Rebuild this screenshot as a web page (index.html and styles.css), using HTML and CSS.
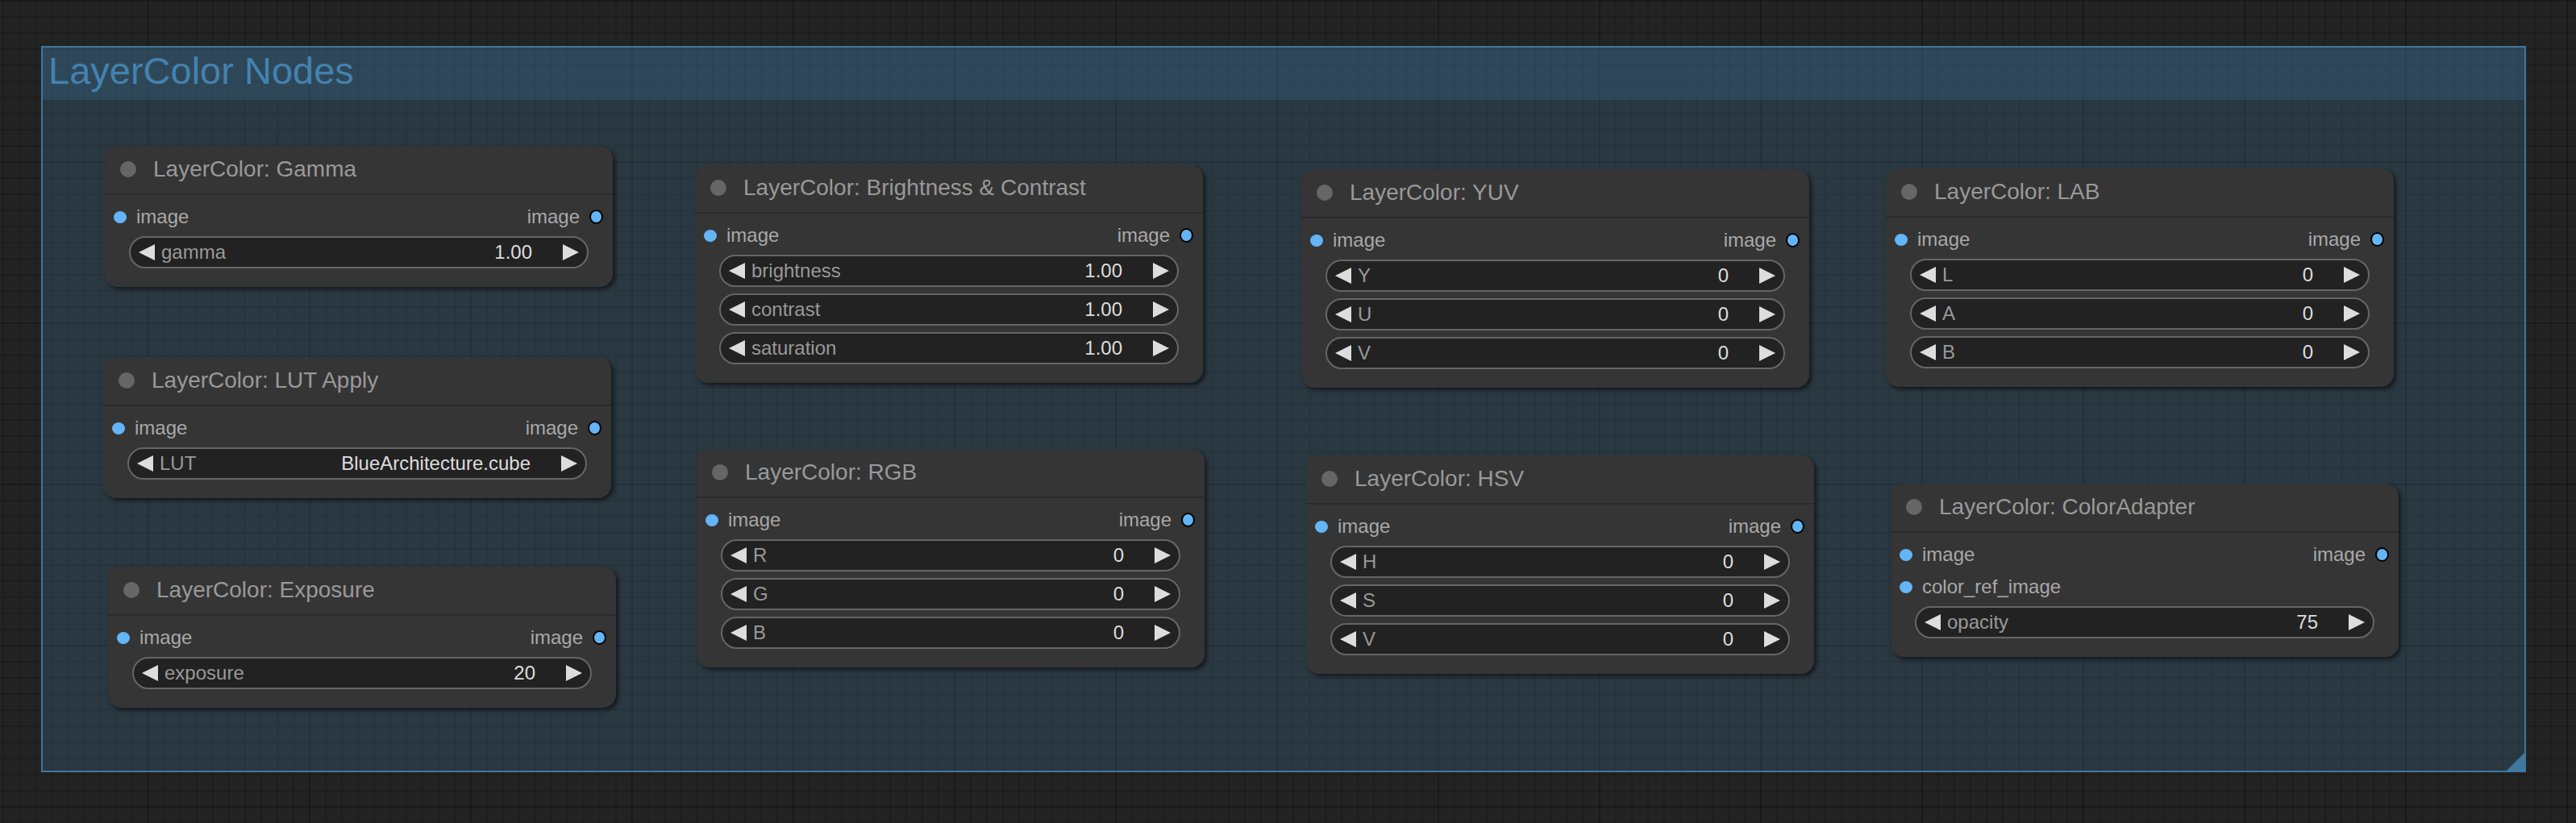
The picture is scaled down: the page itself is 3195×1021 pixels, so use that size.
FILE: index.html
```html
<!DOCTYPE html>
<html>
<head>
<meta charset="utf-8">
<title>LayerColor Nodes</title>
<link rel="stylesheet" href="styles.css">
</head>
<body>
<div class="canvas">
  <div class="group">
    <div class="group-title">LayerColor Nodes</div>
    <div class="group-resize"></div>
  </div>

  <div class="node n-gamma">
    <div class="node-title"><span class="title-dot"></span><span class="title-text">LayerColor: Gamma</span></div>
    <div class="node-body">
      <div class="slot-row"><div class="slot-in"><span class="dot"></span><span class="slot-label">image</span></div><div class="slot-out"><span class="slot-label">image</span><span class="dot out"></span></div></div>
      <div class="widgets">
        <div class="widget"><span class="arrow-l"></span><span class="w-label">gamma</span><span class="w-value">1.00</span><span class="arrow-r"></span></div>
      </div>
    </div>
  </div>

  <div class="node n-lut">
    <div class="node-title"><span class="title-dot"></span><span class="title-text">LayerColor: LUT Apply</span></div>
    <div class="node-body">
      <div class="slot-row"><div class="slot-in"><span class="dot"></span><span class="slot-label">image</span></div><div class="slot-out"><span class="slot-label">image</span><span class="dot out"></span></div></div>
      <div class="widgets">
        <div class="widget"><span class="arrow-l"></span><span class="w-label">LUT</span><span class="w-value">BlueArchitecture.cube</span><span class="arrow-r"></span></div>
      </div>
    </div>
  </div>

  <div class="node n-exposure">
    <div class="node-title"><span class="title-dot"></span><span class="title-text">LayerColor: Exposure</span></div>
    <div class="node-body">
      <div class="slot-row"><div class="slot-in"><span class="dot"></span><span class="slot-label">image</span></div><div class="slot-out"><span class="slot-label">image</span><span class="dot out"></span></div></div>
      <div class="widgets">
        <div class="widget"><span class="arrow-l"></span><span class="w-label">exposure</span><span class="w-value">20</span><span class="arrow-r"></span></div>
      </div>
    </div>
  </div>

  <div class="node n-bc">
    <div class="node-title"><span class="title-dot"></span><span class="title-text">LayerColor: Brightness &amp; Contrast</span></div>
    <div class="node-body">
      <div class="slot-row"><div class="slot-in"><span class="dot"></span><span class="slot-label">image</span></div><div class="slot-out"><span class="slot-label">image</span><span class="dot out"></span></div></div>
      <div class="widgets">
        <div class="widget"><span class="arrow-l"></span><span class="w-label">brightness</span><span class="w-value">1.00</span><span class="arrow-r"></span></div>
        <div class="widget"><span class="arrow-l"></span><span class="w-label">contrast</span><span class="w-value">1.00</span><span class="arrow-r"></span></div>
        <div class="widget"><span class="arrow-l"></span><span class="w-label">saturation</span><span class="w-value">1.00</span><span class="arrow-r"></span></div>
      </div>
    </div>
  </div>

  <div class="node n-rgb">
    <div class="node-title"><span class="title-dot"></span><span class="title-text">LayerColor: RGB</span></div>
    <div class="node-body">
      <div class="slot-row"><div class="slot-in"><span class="dot"></span><span class="slot-label">image</span></div><div class="slot-out"><span class="slot-label">image</span><span class="dot out"></span></div></div>
      <div class="widgets">
        <div class="widget"><span class="arrow-l"></span><span class="w-label">R</span><span class="w-value">0</span><span class="arrow-r"></span></div>
        <div class="widget"><span class="arrow-l"></span><span class="w-label">G</span><span class="w-value">0</span><span class="arrow-r"></span></div>
        <div class="widget"><span class="arrow-l"></span><span class="w-label">B</span><span class="w-value">0</span><span class="arrow-r"></span></div>
      </div>
    </div>
  </div>

  <div class="node n-yuv">
    <div class="node-title"><span class="title-dot"></span><span class="title-text">LayerColor: YUV</span></div>
    <div class="node-body">
      <div class="slot-row"><div class="slot-in"><span class="dot"></span><span class="slot-label">image</span></div><div class="slot-out"><span class="slot-label">image</span><span class="dot out"></span></div></div>
      <div class="widgets">
        <div class="widget"><span class="arrow-l"></span><span class="w-label">Y</span><span class="w-value">0</span><span class="arrow-r"></span></div>
        <div class="widget"><span class="arrow-l"></span><span class="w-label">U</span><span class="w-value">0</span><span class="arrow-r"></span></div>
        <div class="widget"><span class="arrow-l"></span><span class="w-label">V</span><span class="w-value">0</span><span class="arrow-r"></span></div>
      </div>
    </div>
  </div>

  <div class="node n-hsv">
    <div class="node-title"><span class="title-dot"></span><span class="title-text">LayerColor: HSV</span></div>
    <div class="node-body">
      <div class="slot-row"><div class="slot-in"><span class="dot"></span><span class="slot-label">image</span></div><div class="slot-out"><span class="slot-label">image</span><span class="dot out"></span></div></div>
      <div class="widgets">
        <div class="widget"><span class="arrow-l"></span><span class="w-label">H</span><span class="w-value">0</span><span class="arrow-r"></span></div>
        <div class="widget"><span class="arrow-l"></span><span class="w-label">S</span><span class="w-value">0</span><span class="arrow-r"></span></div>
        <div class="widget"><span class="arrow-l"></span><span class="w-label">V</span><span class="w-value">0</span><span class="arrow-r"></span></div>
      </div>
    </div>
  </div>

  <div class="node n-lab">
    <div class="node-title"><span class="title-dot"></span><span class="title-text">LayerColor: LAB</span></div>
    <div class="node-body">
      <div class="slot-row"><div class="slot-in"><span class="dot"></span><span class="slot-label">image</span></div><div class="slot-out"><span class="slot-label">image</span><span class="dot out"></span></div></div>
      <div class="widgets">
        <div class="widget"><span class="arrow-l"></span><span class="w-label">L</span><span class="w-value">0</span><span class="arrow-r"></span></div>
        <div class="widget"><span class="arrow-l"></span><span class="w-label">A</span><span class="w-value">0</span><span class="arrow-r"></span></div>
        <div class="widget"><span class="arrow-l"></span><span class="w-label">B</span><span class="w-value">0</span><span class="arrow-r"></span></div>
      </div>
    </div>
  </div>

  <div class="node n-adapter">
    <div class="node-title"><span class="title-dot"></span><span class="title-text">LayerColor: ColorAdapter</span></div>
    <div class="node-body">
      <div class="slot-row"><div class="slot-in"><span class="dot"></span><span class="slot-label">image</span></div><div class="slot-out"><span class="slot-label">image</span><span class="dot out"></span></div></div>
      <div class="slot-row"><div class="slot-in"><span class="dot"></span><span class="slot-label">color_ref_image</span></div></div>
      <div class="widgets">
        <div class="widget"><span class="arrow-l"></span><span class="w-label">opacity</span><span class="w-value">75</span><span class="arrow-r"></span></div>
      </div>
    </div>
  </div>
</div>
</body>
</html>
```

FILE: styles.css
```css
html, body {
  margin: 0;
  padding: 0;
  width: 3195px;
  height: 1021px;
  overflow: hidden;
}

body {
  background-color: #232323;
  background-image:
    linear-gradient(90deg, rgba(0, 0, 0, 0.14) 2px, transparent 2px),
    linear-gradient(180deg, rgba(0, 0, 0, 0.14) 2px, transparent 2px),
    linear-gradient(90deg, rgba(0, 0, 0, 0.13) 2px, transparent 2px),
    linear-gradient(180deg, rgba(0, 0, 0, 0.13) 2px, transparent 2px);
  background-size: 200px 100%, 100% 200px, 20px 100%, 100% 20px;
  background-position: 183px 0, 0 0, 3px 0, 0 0;
  font-family: "Liberation Sans", Arial, sans-serif;
}

.canvas {
  position: relative;
  width: 3195px;
  height: 1021px;
}

/* ---------- group ---------- */
.group {
  position: absolute;
  left: 51px;
  top: 57px;
  width: 3082px;
  height: 901px;
  box-sizing: border-box;
  border: 2px solid #3f789e;
  background: rgba(63, 120, 158, 0.25);
}

.group-title {
  height: 65px;
  background: rgba(63, 120, 158, 0.25);
  color: #4482b0;
  font-size: 47px;
  line-height: 58px;
  padding-left: 7px;
  white-space: nowrap;
}

.group-resize {
  position: absolute;
  right: 0;
  bottom: 0;
  width: 22px;
  height: 22px;
  background: #3f789e;
  clip-path: polygon(100% 0, 100% 100%, 0 100%);
}

/* ---------- nodes ---------- */
.node {
  position: absolute;
  width: 630px;
  background: #353535;
  border-radius: 16px;
  box-shadow: 3px 3px 5px rgba(0, 0, 0, 0.55);
}

.n-gamma { left: 130px; top: 181px; }
.n-lut { left: 128px; top: 443px; }
.n-exposure { left: 134px; top: 703px; }
.n-bc { left: 862px; top: 204px; }
.n-rgb { left: 864px; top: 557px; }
.n-yuv { left: 1614px; top: 210px; }
.n-hsv { left: 1620px; top: 565px; }
.n-lab { left: 2339px; top: 209px; }
.n-adapter { left: 2345px; top: 600px; }

.node-title {
  height: 61px;
  box-sizing: border-box;
  border-bottom: 2px solid #2b2b2b;
  display: flex;
  align-items: center;
  padding-left: 19px;
  padding-bottom: 1px;
}

.title-dot {
  width: 20px;
  height: 20px;
  border-radius: 50%;
  background: #666;
  flex: none;
}

.title-text {
  margin-left: 21px;
  color: #999;
  font-size: 28px;
  line-height: 60px;
  white-space: nowrap;
}

.node-body {
  padding: 7px 0 23px;
  display: flex;
  flex-direction: column;
}

.slot-row {
  height: 40px;
  display: flex;
  align-items: center;
  justify-content: space-between;
  padding: 0 11px;
}

.slot-in, .slot-out {
  display: flex;
  align-items: center;
  gap: 12px;
}

.slot-label {
  color: #a8a8a8;
  font-size: 24px;
  line-height: 40px;
  white-space: nowrap;
}

.dot {
  width: 16px;
  height: 15px;
  border-radius: 50%;
  background: #64b5f6;
  flex: none;
}

.dot.out {
  width: 13px;
  height: 14px;
  border: 2px solid #000;
  margin-right: 1px;
}

.widgets {
  margin-top: 4px;
  padding: 0 30px;
  display: flex;
  flex-direction: column;
  gap: 8px;
}

.widget {
  height: 40px;
  box-sizing: border-box;
  border: 2px solid #666;
  border-radius: 20px;
  background: #222;
  display: flex;
  align-items: center;
  padding: 0 10px;
  font-size: 24px;
  line-height: 36px;
}

.arrow-l, .arrow-r {
  width: 0;
  height: 0;
  border-top: 10px solid transparent;
  border-bottom: 10px solid transparent;
  flex: none;
}

.arrow-l {
  border-right: 20px solid #ddd;
}

.arrow-r {
  border-left: 20px solid #ddd;
}

.w-label {
  margin-left: 8px;
  flex: 1;
  color: #999;
  white-space: nowrap;
}

.w-value {
  margin-right: 38px;
  color: #ddd;
  white-space: nowrap;
}
```
